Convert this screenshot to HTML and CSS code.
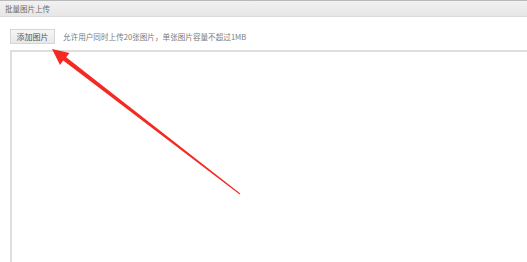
FILE: index.html
```html
<!DOCTYPE html>
<html lang="zh-CN">
<head>
    <meta charset="UTF-8">
    <title>批量图片上传</title>
    <link rel="stylesheet" href="styles.css">
</head>
<body>
    <div class="panel">
        <div class="panel-header">批量图片上传</div>
        <div class="toolbar">
            <button class="add-button">添加图片</button>
            <span class="hint">允许用户同时上传20张图片，单张图片容量不超过1MB</span>
        </div>
        <div class="drop-area"></div>
    </div>
    <svg class="arrow" width="527" height="262" viewBox="0 0 527 262">
        <polygon points="52,49 69.5,53 66.2,57.2 240.3,193.6 239.7,194.4 63.2,60.6 60,65" fill="#f42a22"/>
    </svg>
</body>
</html>
```

FILE: styles.css
```css
body {
    margin: 0;
    background-color: #fff;
    font-family: "Noto Sans CJK SC", "Liberation Sans", sans-serif;
    width: 527px;
    height: 262px;
    overflow: hidden;
    position: relative;
}
.panel {
    display: flex;
    flex-direction: column;
    height: 262px;
}
.panel-header {
    height: 15px;
    line-height: 15px;
    border-top: 1px solid #b9b9b9;
    border-bottom: 1px solid #dcdcdc;
    background: linear-gradient(#f2f2f2, #e6e6e6);
    color: #6a6a6a;
    font-size: 7.5px;
    padding-left: 5px;
}
.toolbar {
    display: flex;
    align-items: center;
    padding: 11px 0 0 10px;
    height: 16px;
}
.add-button {
    width: 45px;
    height: 15px;
    padding: 0;
    border: 1px solid #d6d6d6;
    background: linear-gradient(#f6f6f6, #e8e8e8);
    color: #555;
    font-family: inherit;
    font-size: 8px;
    line-height: 13px;
}
.hint {
    margin-left: 8px;
    color: #7a7a7a;
    font-size: 7.6px;
}
.drop-area {
    flex: 1;
    margin: 6px 0 0 10px;
    border-top: 2px solid #dedede;
    border-left: 2px solid #dedede;
}
.arrow {
    position: absolute;
    left: 0;
    top: 0;
}
```
